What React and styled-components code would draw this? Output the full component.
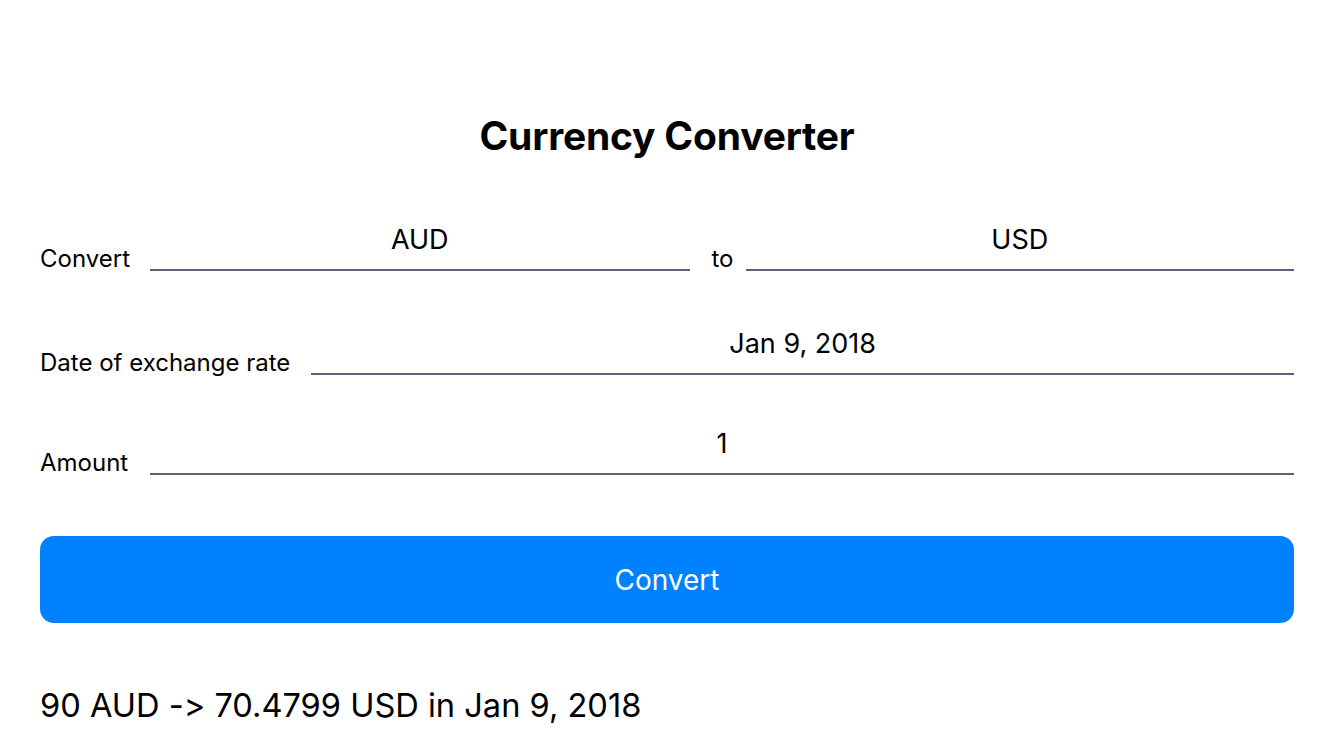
import React from "react";
import styled, { createGlobalStyle } from "styled-components";

const Global = createGlobalStyle`
  html, body { margin: 0; padding: 0; background: #fff; }
  body {
    font-family: Inter, "Noto Sans", sans-serif;
    color: #000;
    font-feature-settings: "calt" 0, "liga" 0;
    font-variant-ligatures: none;
  }
`;

const Page = styled.div`
  width: 1334px;
  height: 750px;
  box-sizing: border-box;
  padding: 112px 40px 0 40px;
  display: flex;
  flex-direction: column;
`;

const Title = styled.h1`
  margin: 0;
  text-align: center;
  font-size: 39px;
  font-weight: 700;
  line-height: 48px;
  letter-spacing: -0.2px;
`;

const Form = styled.div`
  display: flex;
  flex-direction: column;
  margin-top: 60px;
`;

const Row = styled.div`
  display: flex;
  align-items: flex-end;
  height: ${(p) => p.$h}px;
`;

const Label = styled.span`
  font-size: 24px;
  line-height: 24px;
  white-space: nowrap;
  flex: none;
  ${(p) => (p.$w ? `width: ${p.$w}px;` : "")}
  margin-left: ${(p) => p.$before || 0}px;
  margin-right: ${(p) => p.$gap || 0}px;
`;

const Field = styled.div`
  flex: ${(p) => p.$grow || 1} 1 0;
  height: 46px;
  border-bottom: 2px solid #5f6177;
  text-align: center;
  font-size: 27px;
  line-height: 30px;
  box-sizing: border-box;
`;

const Button = styled.button`
  margin-top: 61px;
  height: 87px;
  border: none;
  border-radius: 14px;
  background: #0081ff;
  color: #fff;
  font-family: inherit;
  font-feature-settings: inherit;
  font-size: 28px;
  padding: 0;
`;

const Result = styled.div`
  margin-top: 62px;
  font-size: 32.6px;
  line-height: 40px;
`;

export default function App() {
  return (
    <>
      <Global />
      <Page>
        <Title>Currency Converter</Title>
        <Form>
          <Row $h={51}>
            <Label $w={110}>Convert</Label>
            <Field $grow={540}>AUD</Field>
            <Label $before={22} $gap={12}>to</Label>
            <Field $grow={549}>USD</Field>
          </Row>
          <Row $h={104}>
            <Label $gap={21}>Date of exchange rate</Label>
            <Field>Jan 9, 2018</Field>
          </Row>
          <Row $h={100}>
            <Label $w={110}>Amount</Label>
            <Field>1</Field>
          </Row>
        </Form>
        <Button>Convert</Button>
        <Result>90 AUD -&gt; 70.4799 USD in Jan 9, 2018</Result>
      </Page>
    </>
  );
}
